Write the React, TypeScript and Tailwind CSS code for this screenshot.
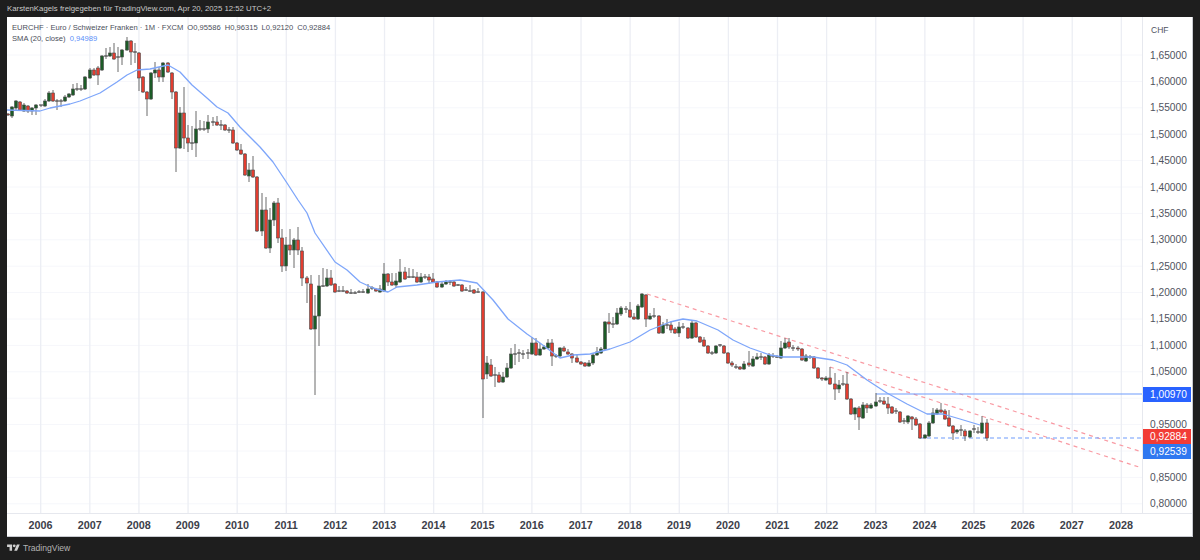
type Candle = [number, number, number, number, number, 'g' | 'r' | 'd'];

// x, body top, body bottom, wick top, wick bottom, kind (all in page pixels)
const candles: Candle[] = [
  [8, 114, 115, 113, 116, 'r'], [12, 107, 116, 106, 118, 'g'], [16, 101, 108, 100, 110, 'g'], [20, 102, 110, 101, 111, 'r'],
  [24, 105, 111, 103, 112, 'g'], [28, 106, 111, 105, 113, 'r'], [32, 108, 111, 107, 115, 'g'], [36, 105, 108, 104, 115, 'g'],
  [41, 105, 105, 105, 107, 'd'], [45, 101, 106, 99, 107, 'g'], [49, 93, 101, 91, 102, 'g'], [53, 93, 101, 90, 102, 'r'],
  [57, 101, 101, 99, 110, 'd'], [61, 101, 101, 99, 107, 'd'], [65, 97, 101, 95, 102, 'g'], [69, 94, 97, 93, 98, 'g'],
  [73, 89, 95, 84, 96, 'g'], [77, 89, 89, 83, 91, 'd'], [81, 89, 89, 85, 91, 'd'], [85, 77, 89, 76, 90, 'g'],
  [90, 70, 78, 68, 79, 'g'], [94, 70, 75, 68, 76, 'r'], [98, 68, 75, 66, 85, 'r'], [102, 56, 70, 55, 71, 'g'],
  [106, 56, 56, 48, 59, 'd'], [110, 53, 56, 47, 57, 'g'], [114, 53, 59, 43, 60, 'r'], [118, 57, 57, 47, 72, 'd'],
  [122, 50, 57, 49, 65, 'g'], [127, 41, 50, 37, 51, 'g'], [131, 41, 52, 40, 65, 'r'], [135, 52, 52, 43, 63, 'd'],
  [139, 53, 78, 52, 91, 'r'], [143, 77, 92, 76, 93, 'r'], [147, 92, 99, 91, 116, 'r'], [151, 73, 99, 72, 100, 'g'],
  [155, 70, 73, 62, 78, 'g'], [159, 70, 77, 67, 82, 'r'], [163, 63, 77, 62, 82, 'g'], [168, 63, 72, 62, 73, 'r'],
  [172, 73, 92, 72, 99, 'r'], [176, 92, 148, 91, 172, 'r'], [180, 113, 148, 107, 149, 'g'], [184, 113, 138, 87, 149, 'r'],
  [188, 138, 143, 125, 152, 'r'], [192, 143, 143, 126, 150, 'd'], [196, 129, 143, 111, 157, 'g'], [200, 129, 129, 120, 131, 'd'],
  [204, 129, 129, 121, 131, 'd'], [208, 122, 129, 115, 133, 'g'], [213, 122, 122, 117, 126, 'd'], [217, 122, 125, 116, 126, 'r'],
  [221, 125, 125, 120, 130, 'd'], [225, 125, 130, 124, 131, 'r'], [229, 130, 130, 127, 133, 'd'], [233, 130, 143, 127, 144, 'r'],
  [237, 143, 150, 142, 151, 'r'], [241, 150, 154, 144, 155, 'r'], [245, 154, 175, 153, 176, 'r'], [249, 170, 176, 163, 182, 'g'],
  [253, 170, 177, 156, 178, 'r'], [257, 177, 231, 176, 232, 'r'], [262, 210, 231, 193, 236, 'g'], [266, 210, 248, 197, 249, 'r'],
  [270, 220, 248, 208, 253, 'g'], [274, 203, 220, 201, 226, 'g'], [278, 203, 238, 198, 243, 'r'], [282, 238, 266, 229, 272, 'r'],
  [286, 245, 266, 237, 271, 'g'], [290, 245, 250, 229, 255, 'r'], [294, 240, 250, 238, 268, 'g'], [298, 240, 250, 227, 255, 'r'],
  [302, 251, 278, 247, 286, 'r'], [307, 278, 283, 276, 303, 'r'], [311, 284, 329, 275, 330, 'r'], [315, 316, 329, 295, 395, 'g'],
  [319, 286, 316, 275, 346, 'g'], [323, 286, 286, 268, 287, 'd'], [327, 278, 286, 269, 287, 'g'], [331, 278, 285, 270, 286, 'r'],
  [335, 284, 292, 283, 293, 'r'], [339, 291, 291, 286, 292, 'd'], [343, 291, 291, 286, 292, 'd'], [347, 291, 293, 290, 294, 'r'],
  [351, 293, 293, 289, 294, 'd'], [355, 293, 293, 291, 294, 'd'], [359, 292, 292, 290, 293, 'd'], [363, 292, 292, 289, 293, 'd'],
  [368, 289, 293, 284, 294, 'g'], [372, 288, 288, 286, 290, 'd'], [376, 289, 291, 288, 292, 'r'], [380, 289, 292, 285, 293, 'g'],
  [384, 274, 291, 263, 292, 'g'], [388, 274, 282, 273, 286, 'r'], [392, 282, 285, 273, 286, 'r'], [396, 281, 285, 273, 288, 'g'],
  [400, 272, 282, 259, 283, 'g'], [405, 272, 279, 267, 280, 'r'], [409, 277, 277, 268, 278, 'd'], [413, 277, 277, 269, 278, 'd'],
  [417, 277, 282, 272, 283, 'r'], [421, 277, 282, 273, 283, 'g'], [425, 277, 277, 274, 279, 'd'], [429, 277, 280, 274, 284, 'r'],
  [433, 279, 282, 273, 283, 'r'], [437, 282, 287, 281, 288, 'r'], [442, 284, 287, 281, 288, 'g'], [446, 282, 284, 280, 285, 'g'],
  [450, 282, 282, 280, 285, 'd'], [454, 282, 286, 281, 287, 'r'], [458, 285, 285, 284, 286, 'd'], [462, 285, 291, 284, 292, 'r'],
  [466, 290, 290, 287, 291, 'd'], [470, 291, 291, 285, 292, 'd'], [474, 290, 293, 289, 294, 'r'], [478, 292, 292, 288, 293, 'd'],
  [483, 292, 379, 291, 418, 'r'], [487, 363, 374, 356, 379, 'g'], [491, 365, 376, 359, 377, 'r'], [495, 375, 375, 367, 387, 'd'],
  [499, 375, 382, 372, 383, 'r'], [503, 377, 382, 372, 383, 'g'], [507, 368, 377, 363, 378, 'g'], [511, 354, 368, 348, 369, 'g'],
  [515, 354, 354, 344, 365, 'd'], [519, 353, 353, 349, 362, 'd'], [523, 354, 354, 350, 359, 'd'], [528, 353, 353, 349, 359, 'd'],
  [532, 343, 354, 337, 355, 'g'], [536, 343, 355, 338, 356, 'r'], [540, 349, 355, 343, 356, 'g'], [544, 347, 349, 345, 350, 'g'],
  [548, 343, 348, 339, 349, 'g'], [552, 343, 356, 339, 366, 'r'], [556, 356, 356, 354, 358, 'd'], [560, 348, 356, 347, 357, 'g'],
  [564, 348, 351, 346, 352, 'r'], [568, 352, 354, 349, 355, 'r'], [572, 354, 358, 353, 363, 'r'], [577, 358, 362, 355, 363, 'r'],
  [581, 362, 364, 361, 365, 'r'], [585, 363, 366, 362, 367, 'r'], [589, 363, 366, 360, 367, 'g'], [593, 355, 363, 353, 365, 'g'],
  [597, 352, 355, 347, 356, 'g'], [601, 349, 353, 347, 354, 'g'], [605, 322, 349, 321, 350, 'g'], [609, 322, 324, 313, 333, 'r'],
  [613, 324, 324, 317, 328, 'd'], [617, 313, 324, 308, 325, 'g'], [621, 308, 314, 306, 316, 'g'], [626, 309, 309, 306, 313, 'd'],
  [630, 310, 317, 302, 318, 'r'], [634, 317, 319, 313, 320, 'r'], [638, 306, 319, 304, 320, 'g'], [642, 294, 307, 293, 308, 'g'],
  [646, 295, 319, 294, 327, 'r'], [650, 316, 319, 313, 320, 'g'], [654, 316, 316, 308, 318, 'd'], [659, 316, 333, 315, 334, 'r'],
  [663, 325, 333, 322, 334, 'g'], [667, 325, 325, 319, 329, 'd'], [671, 325, 330, 322, 333, 'r'], [675, 329, 333, 327, 334, 'r'],
  [679, 327, 333, 322, 337, 'g'], [683, 327, 327, 323, 329, 'd'], [688, 328, 338, 327, 339, 'r'], [692, 323, 338, 321, 339, 'g'],
  [696, 323, 337, 322, 338, 'r'], [700, 337, 342, 336, 343, 'r'], [704, 340, 346, 337, 347, 'r'], [708, 346, 353, 345, 354, 'r'],
  [712, 353, 353, 351, 355, 'd'], [716, 346, 353, 345, 354, 'g'], [720, 345, 345, 344, 347, 'd'], [724, 346, 353, 345, 354, 'r'],
  [728, 353, 363, 352, 364, 'r'], [732, 363, 365, 361, 367, 'r'], [736, 367, 367, 364, 369, 'd'], [740, 367, 369, 366, 370, 'r'],
  [744, 364, 369, 361, 370, 'g'], [749, 363, 365, 351, 367, 'r'], [753, 359, 366, 356, 367, 'g'], [757, 357, 359, 353, 360, 'g'],
  [761, 357, 357, 353, 360, 'd'], [765, 357, 364, 356, 365, 'r'], [769, 355, 364, 353, 365, 'g'], [773, 356, 356, 353, 358, 'd'],
  [777, 357, 357, 355, 358, 'd'], [781, 348, 358, 341, 359, 'g'], [785, 343, 348, 338, 349, 'g'], [789, 342, 347, 338, 349, 'r'],
  [793, 348, 348, 345, 351, 'd'], [798, 348, 349, 346, 351, 'r'], [802, 349, 360, 348, 361, 'r'], [806, 356, 361, 354, 362, 'g'],
  [810, 357, 357, 355, 359, 'd'], [814, 357, 368, 356, 369, 'r'], [818, 368, 378, 367, 379, 'r'], [822, 378, 379, 377, 381, 'r'],
  [826, 378, 380, 376, 381, 'g'], [830, 378, 384, 367, 385, 'r'], [835, 384, 389, 373, 400, 'r'], [839, 385, 389, 380, 393, 'g'],
  [843, 384, 384, 375, 386, 'd'], [847, 384, 399, 372, 400, 'r'], [851, 399, 414, 398, 415, 'r'], [855, 408, 414, 407, 420, 'g'],
  [859, 408, 417, 406, 430, 'r'], [863, 405, 418, 402, 419, 'g'], [867, 405, 408, 403, 413, 'r'], [871, 405, 408, 403, 409, 'g'],
  [876, 402, 406, 393, 407, 'g'], [880, 401, 401, 397, 403, 'd'], [884, 401, 404, 397, 405, 'r'], [888, 404, 408, 397, 414, 'r'],
  [892, 407, 413, 406, 414, 'r'], [896, 411, 411, 408, 414, 'd'], [900, 412, 422, 411, 423, 'r'], [904, 421, 421, 418, 424, 'd'],
  [908, 416, 422, 415, 424, 'g'], [912, 417, 419, 416, 430, 'r'], [916, 419, 425, 417, 426, 'r'], [920, 424, 438, 423, 439, 'r'],
  [925, 435, 438, 434, 439, 'g'], [929, 423, 436, 421, 437, 'g'], [933, 413, 423, 408, 424, 'g'], [937, 410, 414, 408, 415, 'g'],
  [941, 410, 412, 403, 413, 'r'], [945, 411, 419, 409, 420, 'r'], [949, 418, 426, 410, 427, 'r'], [953, 426, 433, 425, 440, 'r'],
  [957, 430, 432, 429, 434, 'g'], [961, 430, 430, 425, 436, 'd'], [965, 431, 436, 429, 441, 'r'], [970, 431, 437, 430, 438, 'g'],
  [974, 429, 429, 425, 433, 'd'], [978, 432, 432, 427, 434, 'd'], [982, 423, 433, 416, 434, 'g'], [987, 423, 438, 419, 441, 'r'],
];

const sma =
  '7,110 40,111 50,108 70,104 80,101 100,93 117,82 127,75 137,70 150,69 168,65 180,72 192,85 207,98 217,107 228,113 240,127 260,147 273,162 287,183 298,200 307,213 315,233 335,262 347,270 360,282 373,288 388,292 397,287 417,285 437,282 460,280 477,283 493,300 508,319 527,334 540,343 560,358 573,355 590,354 610,349 630,342 650,330 670,322 683,319 697,321 718,330 733,340 750,348 770,355 783,357 813,357 833,360 847,365 867,380 887,393 907,404 927,414 943,414 960,419 980,425';

// the 1,00000 and 0,90000 ticks sit behind the coloured price tags
const prices = [
  '1,65000', '1,60000', '1,55000', '1,50000', '1,45000', '1,40000', '1,35000', '1,30000', '1,25000',
  '1,20000', '1,15000', '1,10000', '1,05000', '', '0,95000', '', '0,85000', '0,80000',
];

const years = [
  2006, 2007, 2008, 2009, 2010, 2011, 2012, 2013, 2014, 2015, 2016, 2017, 2018, 2019, 2020, 2021, 2022, 2023, 2024,
  2025, 2026, 2027, 2028,
];

function Chart() {
  return (
    <svg viewBox="7 17 1135 496" className="absolute inset-0 h-full w-full">
      {prices.map((_, i) => (
        <line key={i} x1="7" x2="1142" y1={55 + i * 26.4} y2={55 + i * 26.4} stroke="#f6f7fb" />
      ))}
      {years.map((_, i) => (
        <line key={i} x1={40.7 + i * 49.12} x2={40.7 + i * 49.12} y1="17" y2="514" stroke="#eceef4" strokeWidth="1.3" />
      ))}

      <line x1="647" y1="294" x2="1142" y2="452" stroke="#f99aa3" strokeWidth="1.2" strokeDasharray="4 4" />
      <line x1="830" y1="367" x2="1142" y2="468" stroke="#f99aa3" strokeWidth="1.2" strokeDasharray="4 4" />
      <line x1="876" y1="394" x2="1142" y2="394" stroke="#6f9cfb" strokeWidth="1.2" />
      <line x1="920" y1="438" x2="1142" y2="438" stroke="#6f9cfb" strokeWidth="1.2" strokeDasharray="4 3" />

      {candles.map(([x, top, bot, hi, lo, kind]) => (
        <g key={x}>
          <line x1={x} x2={x} y1={hi} y2={lo} stroke="#6b6b6b" />
          {kind === 'd' ? (
            <line x1={x - 2} x2={x + 2} y1={top} y2={top} stroke="#333333" />
          ) : (
            <rect
              x={x - 1.5}
              y={top}
              width="3"
              height={bot - top}
              fill={kind === 'g' ? '#1c5b27' : '#e23d30'}
              stroke="#4a4a4a"
              strokeWidth="0.6"
            />
          )}
        </g>
      ))}

      <polyline points={sma} fill="none" stroke="#7ea6fa" strokeWidth="1.3" strokeLinejoin="round" />
    </svg>
  );
}

export default function App() {
  return (
    <div className="flex h-[560px] w-[1200px] flex-col overflow-hidden bg-[#1e1e1e] px-[7px] font-['Liberation_Sans',sans-serif] text-[#2a2e39]">
      <div className="flex h-[17px] items-center text-[7.8px] text-[#c8c8c8]">
        KarstenKagels freigegeben für TradingView.com, Apr 20, 2025 12:52 UTC+2
      </div>

      <div className="flex h-[520px] flex-col border-b border-r border-[#c9cbd1] bg-white">
        <div className="flex h-[497px] border-b border-[#e6e8ee]">
          <div className="relative flex-1">
            <Chart />
            <div className="absolute left-[5px] top-[5px] text-[7.6px] leading-[11px] text-[#4a4e59]">
              <div className="flex gap-[4px]">
                <span>EURCHF · Euro / Schweizer Franken · 1M · FXCM</span>
                <span>O0,95586</span>
                <span>H0,96315</span>
                <span>L0,92120</span>
                <span>C0,92884</span>
              </div>
              <div>
                SMA (20, close) <span className="ml-[2px] text-[#5b8ff9]">0,94989</span>
              </div>
            </div>
          </div>

          <div className="relative w-[50px] border-l border-[#e6e8ee] text-[10.2px] text-[#50535e]">
            <div className="absolute left-[8px] top-[7px] text-[8.5px]">CHF</div>
            <div className="flex flex-col pl-[7px] pt-[25px]">
              {prices.map((p, i) => (
                <div key={i} className="flex h-[26.4px] items-center">
                  {p}
                </div>
              ))}
            </div>
            <div className="absolute left-0 top-[370px] flex h-[15px] w-[48px] items-center pl-[7px] text-white bg-[#2962ff]">
              1,00970
            </div>
            <div className="absolute left-0 top-[412px] flex h-[15px] w-[48px] items-center pl-[7px] text-white bg-[#f23c36]">
              0,92884
            </div>
            <div className="absolute left-0 top-[427px] flex h-[15px] w-[48px] items-center pl-[7px] text-white bg-[#2f78f0]">
              0,92539
            </div>
          </div>
        </div>

        <div className="flex flex-1 items-center pl-[9px] text-[10.8px] font-bold text-[#3d404a]">
          {years.map((y) => (
            <div key={y} className="w-[49.12px] shrink-0 text-center">
              {y}
            </div>
          ))}
        </div>
      </div>

      <div className="flex flex-1 items-center gap-[3px] pb-[1px] text-[8.6px] text-[#b4b4b4]">
        <svg viewBox="0 0 36 28" className="h-[10px] w-[13px]" fill="#d0d0d0">
          <path d="M14 22H7V11H0V4h14v18zM28 22h-8l7.5-18h8L28 22z" />
          <circle cx="20" cy="8" r="4" />
        </svg>
        TradingView
      </div>
    </div>
  );
}
